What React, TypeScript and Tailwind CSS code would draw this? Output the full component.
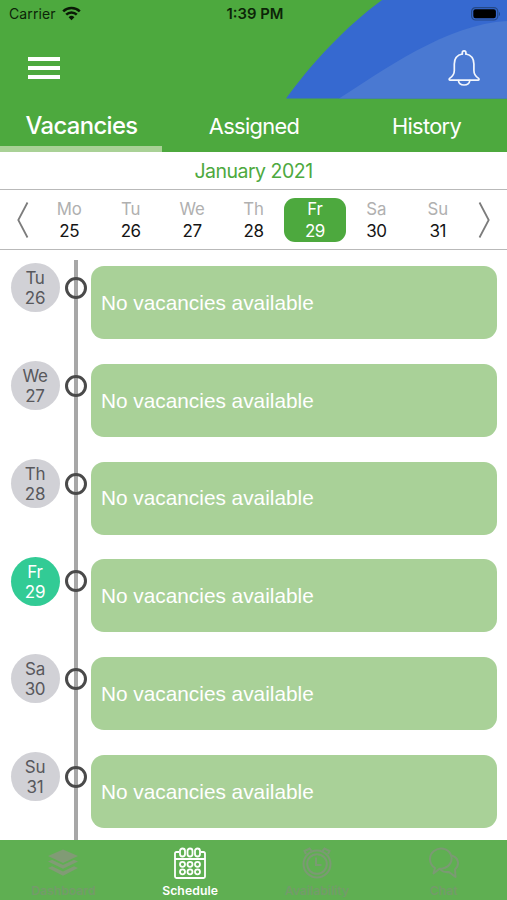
import React from "react";

const week = [
  ["Mo", "25"],
  ["Tu", "26"],
  ["We", "27"],
  ["Th", "28"],
  ["Fr", "29"],
  ["Sa", "30"],
  ["Su", "31"],
];

function StatusBar() {
  return (
    <div className="relative grid h-7 grid-cols-3 items-center pr-[6px] pl-[9px] text-[14px] leading-none text-[#0c2408]">
      <div className="flex items-center gap-[6px]">
        <span className="tracking-[0.1px]">Carrier</span>
        <svg className="-mt-[2px]" width="19" height="15" viewBox="0 0 19 15" fill="none" stroke="#0a1a06" strokeWidth="2.5">
          <path d="M1.2 5.4a11.8 11.8 0 0 1 16.6 0" />
          <path d="M4.2 8.6a7.5 7.5 0 0 1 10.6 0" />
          <path d="M9.5 14.2 6.6 11.2a4.1 4.1 0 0 1 5.8 0Z" fill="#0a1a06" stroke="none" />
        </svg>
      </div>
      <span className="pt-px text-center text-[14.8px] font-semibold">1:39 PM</span>
      <div className="flex justify-end">
        <svg className="-mt-px" width="30" height="14" viewBox="0 0 30 14">
          <rect x="0.6" y="0.6" width="26.2" height="12.4" rx="4" fill="none" stroke="#254987" strokeWidth="1.2" />
          <rect x="2.3" y="2.3" width="22.6" height="9" rx="2.2" fill="#000" />
          <path d="M28 5v4c1.300-.4 1.300-3.600 0-4Z" fill="#254987" />
        </svg>
      </div>
    </div>
  );
}

function Header() {
  return (
    <header className="relative h-[98.5px] bg-[#4da93e]">
      <svg className="absolute inset-0" width="507" height="99" viewBox="0 0 507 99">
        <path d="M286 98.5C311 64 345 27 382 0H507V98.5Z" fill="#3669d0" />
        <path d="M339 98.5C382 71 447 24 507 21V98.5Z" fill="#4a79d2" />
      </svg>
      <StatusBar />
      <div className="relative flex h-[70px] items-center justify-between pr-[26px] pl-7">
        <div className="flex flex-col gap-[5px] pt-[10px]">
          <span className="h-1 w-8 bg-white" />
          <span className="h-1 w-8 bg-white" />
          <span className="h-1 w-8 bg-white" />
        </div>
        <svg className="mt-[10px]" width="34" height="38" viewBox="0 0 34 38" fill="none" stroke="#f2f6fd" strokeWidth="1.7" strokeLinecap="round" strokeLinejoin="round">
          <path d="M15.300 5V3.700a1.800 1.800 0 0 1 3.600 0V5" />
          <path d="M15.300 5C10.200 6 7.300 9.800 7.300 15v6.500c0 3.600-1.400 5.700-4.700 7.900-.8.600-.5 1.700.5 1.700h28c1 0 1.300-1.100.5-1.700-3.300-2.200-4.700-4.300-4.700-7.900V15c0-5.200-2.900-9-8-10" />
          <path d="M11.400 31.500c.8 6 10.600 6 11.400 0" />
        </svg>
      </div>
    </header>
  );
}

function Tabs() {
  return (
    <nav className="flex h-[53.500px] justify-between bg-[#4da93e] text-white">
      <div className="w-[162px] border-b-[6px] border-[#a9d196] pt-[8px] pl-px text-center text-[23.800px] leading-[38px] font-medium tracking-[-0.6px]">
        Vacancies
      </div>
      <div className="w-[162px] pt-[8px] pl-px text-center text-[21.800px] leading-[38px] tracking-[-0.65px]">Assigned</div>
      <div className="w-[162px] pt-[8px] pl-px text-center text-[21.800px] leading-[38px] tracking-[-0.65px]">History</div>
    </nav>
  );
}

function Chevron({ flip = false }: { flip?: boolean }) {
  return (
    <svg className={flip ? "-scale-x-100" : ""} width="12" height="38" viewBox="0 0 12 38" fill="none" stroke="#7c7c7c" strokeWidth="1.800">
      <path d="M10.500 1.500 1.300 19l9.200 17.500" />
    </svg>
  );
}

function WeekStrip() {
  return (
    <div className="flex h-[61px] items-center border-y-[1.500px] border-[#b9b9b9] px-[17px]">
      <Chevron />
      <div className="mx-[9.500px] grid flex-1 grid-cols-7 text-center text-[17px]">
        {week.map(([name, date]) => {
          const active = date === "29";
          return (
            <div
              key={date}
              className={
                active
                  ? "h-11 rounded-[11px] bg-[#4da93e] text-white"
                  : "h-11 text-[#b0b0b0]"
              }
            >
              <div className="text-[16.800px] leading-[22px] tracking-[-0.1px]">{name}</div>
              <div
                className={
                  active
                    ? "leading-[22px] tracking-[-0.5px]"
                    : "leading-[22px] tracking-[-0.5px] text-[#151515]"
                }
              >
                {date}
              </div>
            </div>
          );
        })}
      </div>
      <Chevron flip />
    </div>
  );
}

function Agenda() {
  return (
    <main className="relative flex-1 overflow-hidden pt-4">
      <div className="absolute top-[10px] bottom-0 left-[74px] w-[3.500px] bg-[#a7a7a7]" />
      {week.slice(1).map(([name, date]) => (
        <div key={date} className="relative flex h-[97.750px] pr-[10px] pl-[10.500px]">
          <div
            className={
              date === "29"
                ? "-mt-[2.600px] h-[49px] w-[49px] shrink-0 rounded-full bg-[#32cb95] pt-[5px] text-center text-[17px] leading-5 tracking-[-0.3px] text-white"
                : "-mt-[2.600px] h-[49px] w-[49px] shrink-0 rounded-full bg-[#d1d1d6] pt-[5px] text-center text-[17px] leading-5 tracking-[-0.3px] text-[#58585c]"
            }
          >
            <div>{name}</div>
            <div>{date}</div>
          </div>
          <div className="mt-[11px] ml-[5px] h-[22px] w-[22px] shrink-0 rounded-full border-[3px] border-[#4a4a4a]" />
          <div className="ml-[4.500px] flex h-[73px] flex-1 items-center rounded-[13px] bg-[#a9d198] pl-[10px] font-['Liberation_Sans',sans-serif] text-[20.800px] text-white">
            No vacancies available
          </div>
        </div>
      ))}
    </main>
  );
}

function StackIcon() {
  return (
    <svg width="32" height="32" viewBox="0 0 32 32" fill="#819b75">
      <path d="m16 2.500 15 6.500-15 7-15-7Z" />
      <path d="m1 14.500 4-1.800 11 5.200 11-5.200 4 1.800-15 7.200Z" />
      <path d="m1 21 4-1.800 11 5.200 11-5.200 4 1.800-15 7.700Z" />
    </svg>
  );
}

function CalendarIcon() {
  return (
    <svg width="32" height="32" viewBox="0 0 32 32" fill="none" stroke="#fff" strokeWidth="1.800">
      <path d="M5 5H2.500Q1 5 1 6.500v23Q1 31 2.500 31h27q1.500 0 1.500-1.500v-23Q31 5 29.500 5H27M1 12h30" />
      {[8.5, 16, 23.5].map((x) => (
        <g key={x}>
          <rect x={x - 2.5} y="1.500" width="5" height="8" rx="2.500" />
          <circle cx={x} cy="17.300" r="2.500" />
          <circle cx={x} cy="24.800" r="2.500" />
        </g>
      ))}
    </svg>
  );
}

function ClockIcon() {
  return (
    <svg width="32" height="32" viewBox="0 0 32 32" fill="none" stroke="#7b9a73" strokeWidth="2">
      <circle cx="16" cy="17" r="13.500" />
      <circle cx="16" cy="17" r="9.800" />
      <path d="M15 10.500V18h5.500M5 7 3.500 4 8.500 1.500 10.500 4M21.500 4l2-2.500 5 2.500L27 7" />
    </svg>
  );
}

function ChatIcon() {
  return (
    <svg width="32" height="32" viewBox="0 0 32 32" fill="none" stroke="#7b9a73" strokeWidth="2" strokeLinejoin="round">
      <path d="M7 21C.5 17 .500 8 6 4S19.500 1 22.500 7s-.500 13-8 14.500l-3 .300-6 4.700Z" />
      <path d="M23.500 8.500c6.500 1.500 9 9 3.500 14l.5 7.500-6.500-5c-4 .5-7-.5-9-3" />
    </svg>
  );
}

function BottomBar() {
  const items = [
    { label: "Dashboard", icon: <StackIcon /> },
    { label: "Schedule", icon: <CalendarIcon /> },
    { label: "Availability", icon: <ClockIcon /> },
    { label: "Chat", icon: <ChatIcon /> },
  ];
  return (
    <footer className="grid h-[60px] grid-cols-4 bg-[#5faf52] pt-[7px]">
      {items.map(({ label, icon }) => (
        <div key={label} className="flex flex-col items-center gap-[3px]">
          {icon}
          <span
            className={
              label === "Schedule"
                ? "text-[12.200px] leading-[18px] font-semibold tracking-[0.1px] text-white"
                : "text-[12.200px] leading-[18px] font-semibold text-[#749b6a]"
            }
          >
            {label}
          </span>
        </div>
      ))}
    </footer>
  );
}

export default function App() {
  return (
    <div className="flex h-[900px] w-[507px] flex-col overflow-hidden bg-white font-[Inter,sans-serif]">
      <Header />
      <Tabs />
      <div className="h-[37px] text-center text-[19.500px] leading-[38px] tracking-[-0.5px] text-[#4da93e]">
        January 2021
      </div>
      <WeekStrip />
      <Agenda />
      <BottomBar />
    </div>
  );
}
